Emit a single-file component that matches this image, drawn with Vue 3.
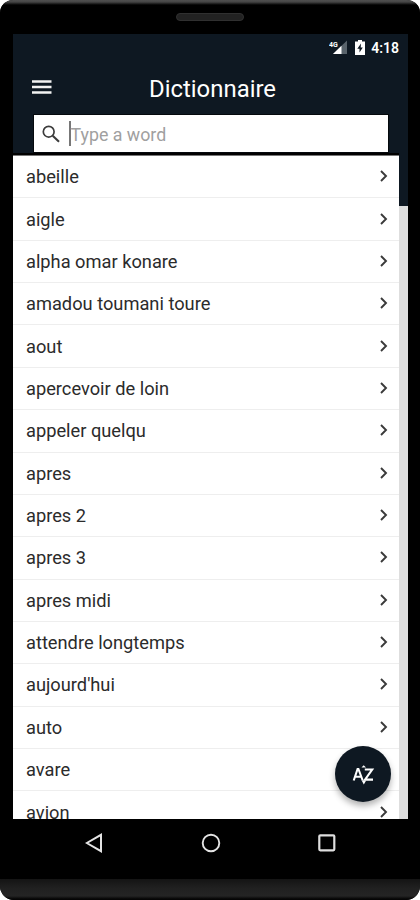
<script setup>
const words = [
  'abeille', 'aigle', 'alpha omar konare', 'amadou toumani toure', 'aout',
  'apercevoir de loin', 'appeler quelqu', 'apres', 'apres 2', 'apres 3',
  'apres midi', 'attendre longtemps', "aujourd'hui", 'auto', 'avare', 'avion',
]
</script>

<template>
  <div class="phone">
    <div class="bezel-top"><div class="speaker"></div></div>
    <div class="screen">
      <header class="header">
        <div class="status">
          <svg class="signal" width="19" height="16" viewBox="0 0 19 16">
            <path d="M18 0.500V14H4z" fill="#59636b" />
            <path d="M12.500 5.800V14H4z" fill="#fff" />
            <text x="0" y="6.500" class="net">4G</text>
          </svg>
          <svg class="battery" width="10" height="16" viewBox="0 0 10 16">
            <path d="M3 0h4v1.500h3V15H0V1.500h3z" fill="#fff" />
            <path d="M6 3.500L2.300 8.800h2.200v3.700L7.800 7.500H5.700z" fill="#0e1822" />
          </svg>
          <span class="time">4:18</span>
        </div>
        <div class="toolbar">
          <svg class="menu" width="20" height="14" viewBox="0 0 20 14">
            <path d="M0 1.500h19.500M0 7h19.500M0 12.500h19.500" stroke="#f2f2f2" stroke-width="2.300" />
          </svg>
          <h1 class="title">Dictionnaire</h1>
        </div>
        <div class="search">
          <svg class="glass" width="19" height="18" viewBox="0 0 19 18">
            <circle cx="6.700" cy="6.700" r="5.400" fill="none" stroke="#3c3c3c" stroke-width="1.700" />
            <path d="M10.700 10.700L17 16.700" stroke="#3c3c3c" stroke-width="2.100" />
          </svg>
          <span class="caret"></span>
          <span class="placeholder">Type a word</span>
        </div>
      </header>
      <main class="body">
        <ul class="list">
          <li v-for="word in words" :key="word" class="row">
            <span class="word">{{ word }}</span>
            <svg class="chevron" width="8" height="12" viewBox="0 0 8 12">
              <path d="M1 1l5 5-5 5" fill="none" stroke="#3a3a3a" stroke-width="1.900" />
            </svg>
          </li>
        </ul>
        <div class="gutter"></div>
        <button class="fab" aria-label="Sort">
          <svg width="56" height="56" viewBox="0 0 56 56">
            <g fill="none" stroke="#fff" stroke-width="2.100">
              <path d="M18.700 34.500L22.600 23h.8l4.300 11.500M20.200 30.700h5.800" />
              <path d="M29.800 23.500h7.400L30 33.600h8" />
            </g>
            <path d="M26.500 21.500l2.200-2.300 2.300 2.300zM26.700 34.500h4.500l-2.400 3.900z" fill="#fff" />
          </svg>
        </button>
      </main>
    </div>
    <nav class="nav">
      <svg class="back" width="18" height="20" viewBox="0 0 18 20">
        <path d="M16 1.800v16.400L1.800 10z" fill="none" stroke="#e4e4e4" stroke-width="2" />
      </svg>
      <svg class="home" width="20" height="20" viewBox="0 0 20 20">
        <circle cx="10" cy="10" r="8.300" fill="none" stroke="#e4e4e4" stroke-width="1.900" />
      </svg>
      <svg class="recent" width="18" height="18" viewBox="0 0 18 18">
        <rect x="1.300" y="1.300" width="15" height="15" rx="1" fill="none" stroke="#dedede" stroke-width="2.200" />
      </svg>
    </nav>
    <div class="chin"></div>
  </div>
</template>

<style>
body { background: #fff; }
</style>

<style scoped>
.phone {
  width: 420px;
  height: 900px;
  display: flex;
  flex-direction: column;
  background: #000;
  border-radius: 13px 13px 14px 14px;
  overflow: hidden;
  font-family: Roboto, "Liberation Sans", sans-serif;
}
.bezel-top {
  height: 34px;
  box-sizing: border-box;
  padding-top: 13px;
  background: linear-gradient(#505050 0, #454545 2px, #000 5px);
}
.speaker {
  width: 68px;
  height: 8px;
  box-sizing: border-box;
  margin-left: 176px;
  border-radius: 4px;
  background: #222;
  border: 1px solid #303030;
}
.screen {
  width: 395px;
  height: 785px;
  margin-left: 13px;
  display: flex;
  flex-direction: column;
  background: #0e1822;
}
.header { height: 121px; box-sizing: border-box; }
.status {
  height: 27px;
  display: flex;
  align-items: center;
  justify-content: flex-end;
  padding-right: 9px;
  color: #fff;
}
.net { font: 700 7px Roboto, sans-serif; fill: #fff; }
.battery { margin: 0 6px 0 7px; }
.time { margin-top: 2px; font-size: 14px; font-weight: 600; line-height: 25px; }
.toolbar { height: 54px; display: flex; align-items: center; padding-left: 19px; }
.menu { margin-top: -2px; }
.title {
  margin: 1px 0 0 97px;
  font-size: 23.9px;
  line-height: 30px;
  font-weight: 400;
  color: #fff;
}
.search {
  width: 354px;
  height: 37px;
  margin-left: 20.5px;
  display: flex;
  align-items: center;
  padding-left: 8.5px;
  box-sizing: border-box;
  background: #fff;
  box-shadow: 0 0 0 1px #05090d;
}
.caret { width: 1.5px; height: 25px; margin-left: 8px; background: #777; }
.placeholder { margin-top: 2px; font-size: 17.8px; color: #a0a0a0; line-height: 36px; }
.body {
  position: relative;
  height: 664px;
  display: flex;
  clip-path: inset(-2px 0 0 0);
}
.list {
  width: 386px;
  height: 664px;
  box-sizing: border-box;
  margin: 0;
  padding: 0;
  list-style: none;
  background: #fff;
  border-top: 1px solid #777;
  box-shadow: 0 -2px 0 #000;
}
.row {
  height: 42.36px;
  box-sizing: border-box;
  display: flex;
  align-items: center;
  justify-content: space-between;
  padding: 1px 11px 0 13px;
  border-bottom: 1px solid #eee;
}
.word { font-size: 18.25px; line-height: 24px; color: #2b2b2b; }
.chevron { margin-top: -2px; }
.gutter { flex: 1; margin-top: 51px; background: #dedede; }
.fab {
  position: absolute;
  left: 322px;
  bottom: 17px;
  width: 56px;
  height: 56px;
  padding: 0;
  border: 0;
  border-radius: 50%;
  background: #0e1822;
  box-shadow: 0 4px 6px rgba(0, 0, 0, 0.3);
}
.fab svg { display: block; }
.nav { height: 60px; display: flex; align-items: flex-start; padding: 14px 0 0 85px; box-sizing: border-box; }
.home { margin-left: 98px; }
.recent { margin: 1px 0 0 97px; }
.chin { flex: 1; background: linear-gradient(#141414 0, #202020 9px, #242424 17px, #050505 20px); }
</style>
